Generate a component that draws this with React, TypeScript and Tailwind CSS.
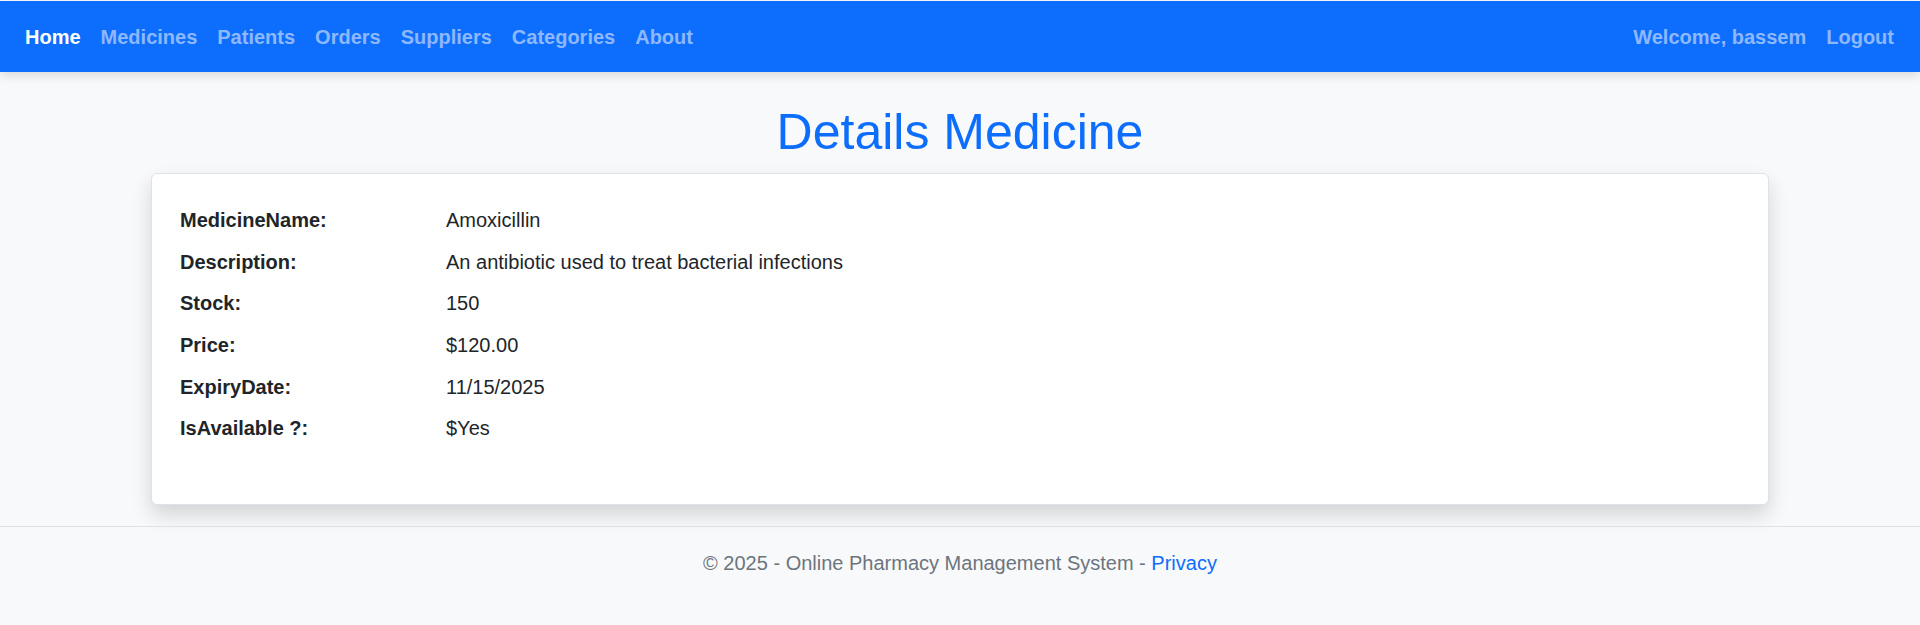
import React from "react";

const navLinks = ["Home", "Medicines", "Patients", "Orders", "Suppliers", "Categories", "About"];

const rows: [string, string][] = [
  ["MedicineName:", "Amoxicillin"],
  ["Description:", "An antibiotic used to treat bacterial infections"],
  ["Stock:", "150"],
  ["Price:", "$120.00"],
  ["ExpiryDate:", "11/15/2025"],
  ["IsAvailable ?:", "$Yes"],
];

export default function App() {
  return (
    <div
      className="min-h-screen bg-[#f8f9fa] text-[#212529] pt-[1px]"
      style={{ fontFamily: '"Liberation Sans", Arial, sans-serif' }}
    >
      <nav className="relative z-10 h-[71px] bg-[#0d6efd] shadow-[0_4px_10px_rgba(0,0,0,0.12)] flex items-center justify-between px-[15px]">
        <ul className="flex items-center">
          {navLinks.map((l, i) => (
            <li key={l}>
              <a
                className={
                  "block px-[10px] text-[20px] leading-[30px] font-bold " +
                  (i === 0 ? "text-white" : "text-[#8db8fe]")
                }
              >
                {l}
              </a>
            </li>
          ))}
        </ul>
        <ul className="flex items-center pr-[1px]">
          <li>
            <span className="block px-[10px] text-[20px] leading-[30px] font-bold text-[#8db8fe]">
              Welcome, bassem
            </span>
          </li>
          <li>
            <a className="block px-[10px] text-[20px] leading-[30px] font-bold text-[#8db8fe]">Logout</a>
          </li>
        </ul>
      </nav>

      <main>
        <h1 className="mt-[30px] mb-[11px] text-center text-[50px] leading-[60px] text-[#0d6efd] font-normal">
          Details Medicine
        </h1>
        <div className="mx-auto w-[1618px] bg-white border border-[#dee2e6] rounded-[6px] shadow-[0_10px_20px_rgba(0,0,0,0.15)] pt-[31px] pb-[49px] px-[28px]">
          {rows.map(([k, v]) => (
            <div key={k} className="flex text-[20px] leading-[30px] mb-[11.7px]">
              <div className="w-[266px] shrink-0 font-bold">{k}</div>
              <div>{v}</div>
            </div>
          ))}
        </div>
      </main>

      <footer className="mt-[21px] border-t border-[#dee2e6] pt-[21px] text-center text-[20px] leading-[30px] text-[#6c757d]">
        © 2025 - Online Pharmacy Management System - <a className="text-[#0d6efd]">Privacy</a>
      </footer>
    </div>
  );
}
